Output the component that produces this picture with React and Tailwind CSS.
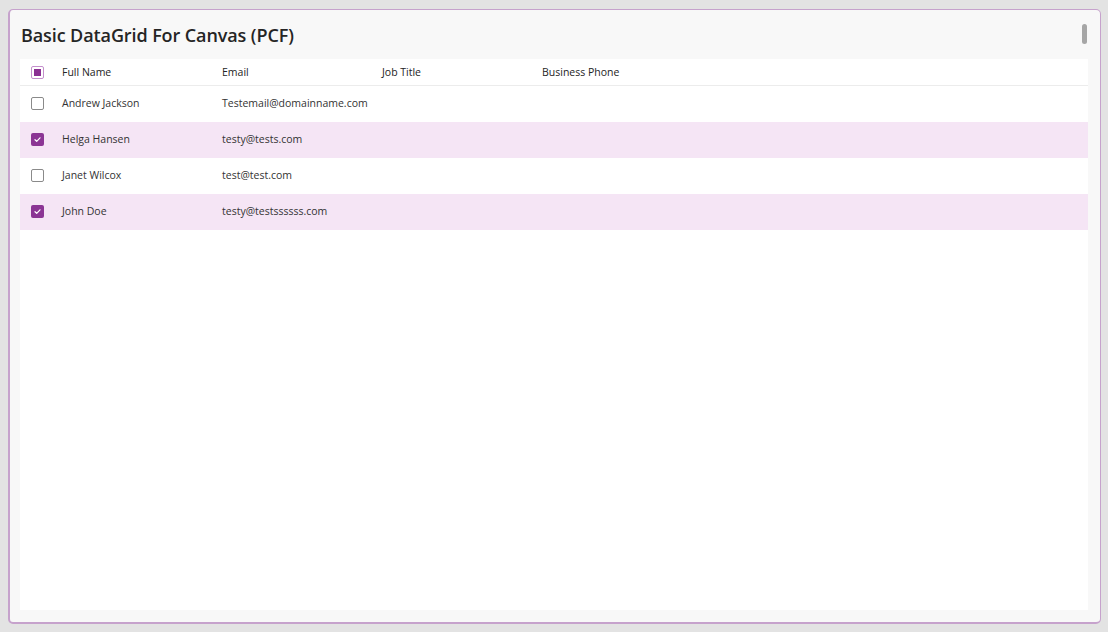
import React from "react";

const rows = [
  { name: "Andrew Jackson", email: "Testemail@domainname.com", checked: false },
  { name: "Helga Hansen", email: "testy@tests.com", checked: true },
  { name: "Janet Wilcox", email: "test@test.com", checked: false },
  { name: "John Doe", email: "testy@testssssss.com", checked: true },
];

const columns = ["Full Name", "Email", "Job Title", "Business Phone"];

function Check({ checked }) {
  if (checked) {
    return (
      <div className="w-[13px] h-[13px] rounded-[2px] bg-[#8b3594] flex items-center justify-center">
        <svg width="9" height="9" viewBox="0 0 9 9" fill="none">
          <path d="M2 4.7 L3.7 6.3 L7 2.8" stroke="white" strokeWidth="1.2" strokeLinecap="round" strokeLinejoin="round" />
        </svg>
      </div>
    );
  }
  return <div className="w-[13px] h-[13px] rounded-[2px] border border-[#8a8a8a] bg-white" />;
}

export default function App() {
  return (
    <div className="w-[1108px] h-[632px] bg-[#e3e3e3] pt-[9px] pl-[8px] font-['Open_Sans','Noto_Sans',sans-serif]">
      <div className="w-[1093px] h-[615px] bg-[#f8f8f8] border border-l-2 border-b-2 border-[#c6a2cc] rounded-[5px] relative flex flex-col">
        <div className="h-[49px] flex items-center pl-[11px] pt-[2px]">
          <h1 className="text-[18px] font-semibold text-[#252525] tracking-[-0.1px]">Basic DataGrid For Canvas (PCF)</h1>
        </div>
        <div className="absolute right-[13px] top-[14px] w-[5px] h-[20px] rounded-full bg-[#a6a6a6]" />
        <div className="ml-[10px] w-[1068px] h-[551px] bg-white">
          <div className="h-[27px] flex items-center border-b border-[#ececec]">
            <div className="w-[42px] pl-[11px] flex items-center">
              <div className="w-[13px] h-[13px] rounded-[2px] border border-[#c48fcc] flex items-center justify-center">
                <div className="w-[7px] h-[7px] bg-[#8b2f93]" />
              </div>
            </div>
            {columns.map((c) => (
              <div key={c} className="w-[160px] text-[10.5px] font-medium text-[#242424] mt-[1px]">
                {c}
              </div>
            ))}
          </div>
          {rows.map((r) => (
            <div
              key={r.name}
              className={`h-[36px] flex items-center ${r.checked ? "bg-[#f5e5f5]" : "bg-white"}`}
            >
              <div className="w-[42px] pl-[11px] flex items-center -mt-[1px]">
                <Check checked={r.checked} />
              </div>
              <div className="w-[160px] text-[10.5px] text-[#333] -mt-[1px]">{r.name}</div>
              <div className="w-[160px] text-[10.5px] text-[#333] whitespace-nowrap -mt-[1px]">{r.email}</div>
              <div className="w-[160px]" />
              <div className="w-[160px]" />
            </div>
          ))}
        </div>
      </div>
    </div>
  );
}
